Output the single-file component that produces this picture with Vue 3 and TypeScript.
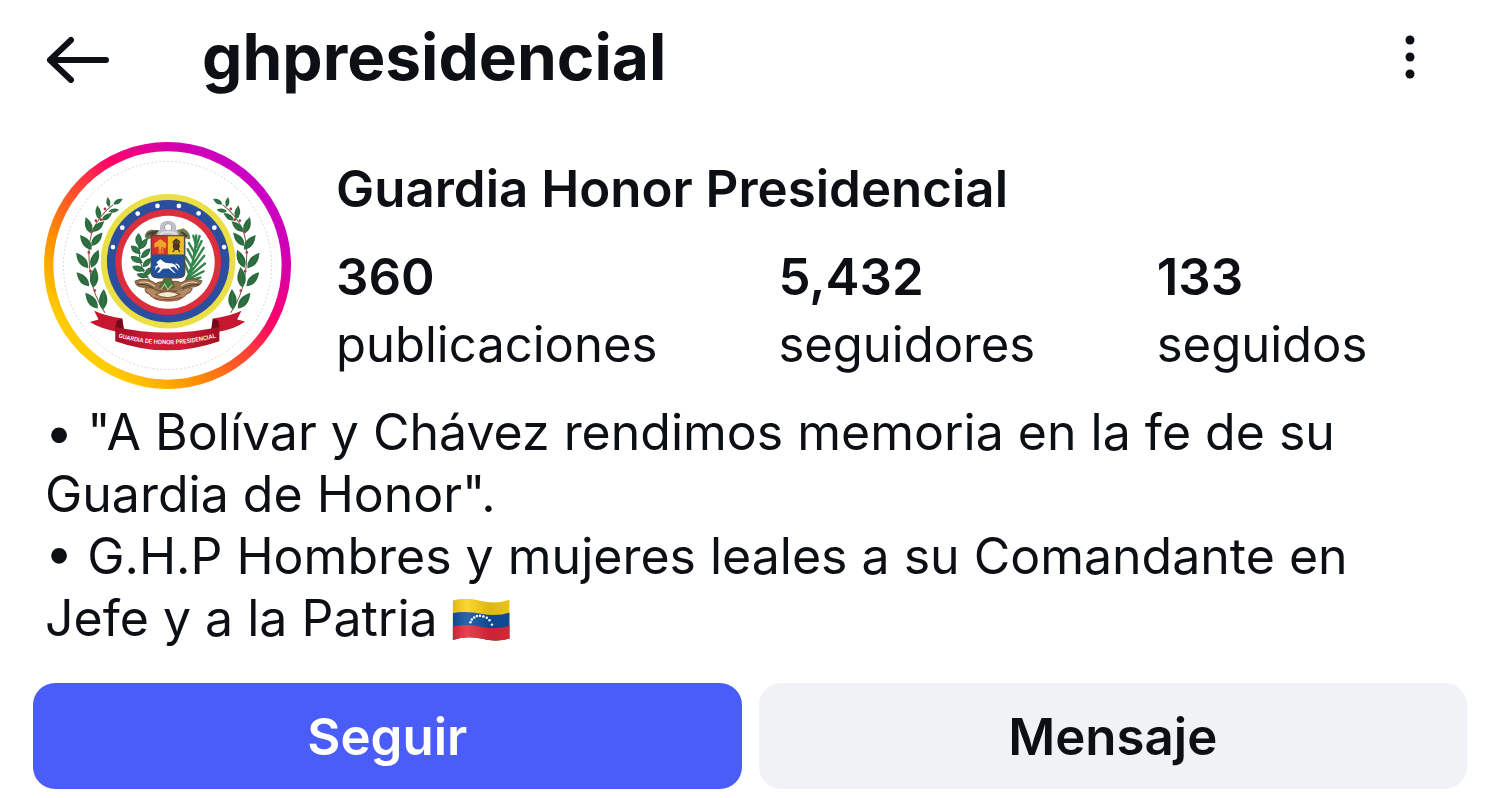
<script setup lang="ts">
interface Leaf {
  x: number
  y: number
  angle: number
  size: number
}

interface Stat {
  value: string
  label: string
}

const stats: Stat[] = [
  { value: '360', label: 'publicaciones' },
  { value: '5,432', label: 'seguidores' },
  { value: '133', label: 'seguidos' },
]

const leaves: Leaf[] = [
  { x: 236, y: 217, angle: -98, size: 30 },
  { x: 265, y: 216, angle: -30, size: 32 },
  { x: 253, y: 243, angle: -8, size: 32 },
  { x: 206, y: 248, angle: -98, size: 42 },
  { x: 232, y: 261, angle: -35, size: 38 },
  { x: 177, y: 287, angle: -108, size: 52 },
  { x: 206, y: 291, angle: -42, size: 48 },
  { x: 169, y: 338, angle: -128, size: 56 },
  { x: 202, y: 328, angle: -50, size: 52 },
  { x: 158, y: 392, angle: -128, size: 58 },
  { x: 196, y: 387, angle: -68, size: 58 },
  { x: 160, y: 448, angle: -132, size: 56 },
  { x: 194, y: 442, angle: -85, size: 62 },
  { x: 186, y: 512, angle: -128, size: 60 },
  { x: 221, y: 508, angle: -87, size: 62 },
]

const berries = [
  [226, 238], [199, 273], [186, 306], [178, 368], [183, 424], [196, 482], [214, 270],
]

const ringStars = [
  [250, 352], [278, 294], [324, 252], [383, 229],
  [447, 229], [506, 251], [553, 294], [582, 352],
]

const flagStars = [
  [106, 121], [110, 113], [117, 107], [125, 103],
  [134, 102], [144, 104], [154, 108], [162, 115], [169, 128],
]

function leafPath(size: number): string {
  const h = size / 2
  const w = size * 0.4
  return `M${-h} 0 Q${-h * 0.2} ${-w} ${h} 0 Q${-h * 0.2} ${w} ${-h} 0Z`
}
</script>

<template>
  <main class="profile">
    <header class="topbar">
      <button class="icon-button" type="button" aria-label="Volver">
        <svg class="back" viewBox="0 0 64 48" aria-hidden="true">
          <path d="M26 5 5 25 26 45M5 25H61" />
        </svg>
      </button>
      <h1 class="username">ghpresidencial</h1>
      <button class="icon-button" type="button" aria-label="Más opciones">
        <svg class="more" viewBox="0 0 12 44" aria-hidden="true">
          <circle cx="5" cy="3" r="4.5" />
          <circle cx="5" cy="20" r="4.5" />
          <circle cx="5" cy="37" r="4.5" />
        </svg>
      </button>
    </header>

    <section class="summary">
      <svg class="avatar" viewBox="44 38 738 738" role="img" aria-label="Guardia de Honor Presidencial">
        <defs>
          <linearGradient id="story" gradientUnits="userSpaceOnUse" x1="152" y1="668" x2="674" y2="146">
            <stop offset="0.04" stop-color="#ffcc00" />
            <stop offset="0.24" stop-color="#ff9200" />
            <stop offset="0.47" stop-color="#ff4434" />
            <stop offset="0.64" stop-color="#ff0069" />
            <stop offset="0.85" stop-color="#d300ae" />
            <stop offset="1" stop-color="#ca00c6" />
          </linearGradient>
          <linearGradient id="ribbon" x1="0" x2="1" y1="0" y2="0">
            <stop offset="0" stop-color="#a30d22" />
            <stop offset="0.35" stop-color="#cf1b35" />
            <stop offset="0.65" stop-color="#cf1b35" />
            <stop offset="1" stop-color="#a30d22" />
          </linearGradient>
          <path id="motto" d="M262 621Q412 663 562 621" />
          <g id="branch">
            <path class="stem" d="M226 548Q191 495 184 440Q170 355 190 300Q212 254 250 226" />
            <g v-for="(leaf, i) in leaves" :key="i" :transform="`translate(${leaf.x} ${leaf.y}) rotate(${leaf.angle})`">
              <path :d="leafPath(leaf.size)" fill="#296b3c" />
              <path class="vein" :d="`M${-leaf.size / 2} 0H${leaf.size / 2.6}`" />
            </g>
            <circle v-for="(b, i) in berries" :key="`b${i}`" :cx="b[0]" :cy="b[1]" r="4" fill="#b5383f" />
          </g>
        </defs>

        <circle cx="413" cy="407" r="355" fill="#fff" stroke="url(#story)" stroke-width="28" />
        <circle class="edge" cx="413" cy="407" r="311" />

        <use href="#branch" />
        <use href="#branch" transform="translate(828 0) scale(-1 1)" />

        <circle cx="415" cy="394" r="201" fill="#eadf45" />
        <circle cx="415" cy="394" r="183" fill="#2b4f9e" />
        <circle cx="415" cy="397" r="158" fill="#dc2f3d" />
        <circle cx="415" cy="397" r="139" fill="#fff" />
        <circle v-for="(s, i) in ringStars" :key="`s${i}`" :cx="s[0]" :cy="s[1]" r="7" fill="#fff" />

        <!-- laurel and palm beside the shield -->
        <g class="laurel">
          <path d="M361 452Q323 420 328 320" />
          <path d="M327 312Q309 332 328 350Q343 331 327 312M352 327Q327 338 330 357Q353 352 352 327M305 349Q307 371 331 371Q328 349 305 349M360 357Q337 363 335 383Q358 382 360 357M304 381Q311 402 337 398Q329 377 304 381M363 386Q341 390 340 410Q361 410 363 386M309 410Q317 429 344 422Q333 404 309 410M364 414Q345 417 347 436Q366 435 364 414M322 433Q332 448 355 441Q342 426 322 433" />
        </g>
        <g class="palm">
          <path d="M468 451Q494 405 499 317" />
          <path d="M494 370 477 340M493 380 515 334M491 392 473 358M489 405 521 354M486 415 467 382M482 427 523 378M479 436 465 402M475 442 525 401M472 450 521 424M469 454 511 443M498 345 490 318M498 352 509 319" />
        </g>

        <!-- cornucopias -->
        <path d="M345 319Q348 303 365 300L389 302Q394 313 381 319L364 323Q351 337 345 319Z" fill="#687549" />
        <path d="M440 302 461 296Q482 309 481 327Q474 333 461 319L440 319Z" fill="#758052" />
        <path d="M352 314 374 306M454 306 472 320M365 318 383 303" stroke="#4b3e31" stroke-width="6" />
        <path d="M382 317Q381 305 393 301Q387 276 414 275Q441 276 437 300Q447 304 447 318Z" fill="#c3c3cb" stroke="#a3a1aa" stroke-width="2" />
        <circle cx="415" cy="293" r="11" fill="#fff" stroke="#9c9aa4" stroke-width="3" />
        <path d="M391 313Q414 300 440 313" fill="none" stroke="#e2e1e7" stroke-width="5" />

        <!-- shield -->
        <path d="M364 318H465V427Q465 444 444 444H385Q364 444 364 427Z" fill="#23509b" />
        <path d="M367 318H414V374H367Z" fill="#d72f2b" />
        <path d="M414 318H462V374H414Z" fill="#efbe20" />
        <path d="M364 318H465V427Q465 444 444 444H385Q364 444 364 427Z" fill="none" stroke="#58402c" stroke-width="3" />
        <path d="M388 372V349M393 372V349M399 372V349M376 352Q372 339 383 337Q391 323 401 337Q412 340 406 354Q394 343 391 357Q387 343 376 352Z" fill="#f0a42d" stroke="#f0a42d" stroke-width="3" />
        <path d="M429 366 450 336M429 336 450 366M439 326V361M430 350H450M432 334Q439 325 447 334V354Q439 363 431 354Z" fill="#885d1c" stroke="#46351e" stroke-width="4" />
        <path d="M370 411Q378 413 385 405L380 397 392 388 399 394Q406 401 421 400Q435 400 440 411L446 424 439 417 432 411 421 413 438 430 431 428 417 416 399 417 388 429 382 428 392 415 385 411 375 422 378 412Z" fill="#fff" />
        <path d="M437 402Q448 405 448 414" fill="none" stroke="#fff" stroke-width="4" />

        <!-- ribbons under the shield -->
        <g class="scroll">
          <path d="M316 454Q345 440 378 461Q401 448 414 468Q430 446 454 459Q483 439 516 453Q510 473 477 472L453 477Q435 488 414 481Q393 489 374 477L346 472Q319 474 316 454Z" fill="#987451" />
          <path d="M346 477Q362 469 378 481Q397 489 414 482Q440 489 458 479Q472 469 487 477Q482 488 470 492Q451 516 414 513Q374 514 358 492Q346 488 346 477Z" fill="#b68b62" />
          <path d="M378 493Q414 476 450 493Q432 503 414 503Q393 503 378 493Z" fill="#f3ead2" />
          <path d="M329 458Q354 452 375 469M453 468Q479 450 502 459" stroke="#f2d8b1" />
          <path d="M323 463Q350 461 370 475M458 474Q480 464 507 464" stroke="#463b34" />
          <path d="M372 503Q414 516 456 502" stroke="#a93133" />
          <path d="M404 444 389 472 412 480 434 472 424 446Z" fill="#457b39" />
          <path d="M393 478 405 462 414 480 427 464" stroke="#d0c9a0" />
        </g>

        <!-- motto ribbon -->
        <path d="M194 542Q225 557 278 565L283 599 259 604Q211 595 181 576L207 568Z" fill="#c5172f" />
        <path d="M634 542Q603 557 550 565L545 599 569 604Q617 595 645 574L621 568Z" fill="#c5172f" />
        <path d="M257 594 283 602 277 565 261 572ZM568 594 543 602 548 565 565 572Z" fill="#73091a" />
        <path d="M257 591Q412 624 568 591V633Q412 688 257 633Z" fill="url(#ribbon)" />
        <text class="motto"><textPath href="#motto" startOffset="50%">GUARDIA DE HONOR PRESIDENCIAL</textPath></text>
      </svg>

      <div class="info">
        <h2 class="name">Guardia Honor Presidencial</h2>
        <ul class="stats">
          <li v-for="stat in stats" :key="stat.label">
            <a class="stat" href="#">
              <strong>{{ stat.value }}</strong>
              <span>{{ stat.label }}</span>
            </a>
          </li>
        </ul>
      </div>
    </section>

    <p class="bio">
      • "A Bolívar y Chávez rendimos memoria en la fe de su<br />
      Guardia de Honor".<br />
      • G.H.P Hombres y mujeres leales a su Comandante en<br />
      Jefe y a la Patria
      <svg class="flag" viewBox="52 50 170 126" role="img" aria-label="Bandera de Venezuela">
        <defs>
          <clipPath id="flag-shape">
            <path d="M54 57Q91 47 135 58Q180 69 221 55V169Q181 181 137 169Q92 159 54 173Z" />
          </clipPath>
          <linearGradient id="flag-shade" x1="0" x2="1" y1="0" y2="0">
            <stop offset="0" stop-color="#000" stop-opacity="0.12" />
            <stop offset="0.25" stop-color="#fff" stop-opacity="0.12" />
            <stop offset="0.65" stop-color="#000" stop-opacity="0.12" />
            <stop offset="1" stop-color="#000" stop-opacity="0.06" />
          </linearGradient>
        </defs>
        <g clip-path="url(#flag-shape)">
          <path d="M52 45H224V180H52Z" fill="#fbd116" />
          <path d="M52 95Q91 86 137 96Q182 106 224 92V180H52Z" fill="#0e50a0" />
          <path d="M52 134Q91 124 137 134Q182 144 224 131V180H52Z" fill="#e5283a" />
          <path d="M52 45H224V180H52Z" fill="url(#flag-shade)" />
        </g>
        <circle v-for="(s, i) in flagStars" :key="i" :cx="s[0]" :cy="s[1]" r="3.6" fill="#fff" />
      </svg>
    </p>

    <div class="actions">
      <button class="action primary" type="button">Seguir</button>
      <button class="action" type="button">Mensaje</button>
    </div>
  </main>
</template>

<style>
body {
  margin: 0;
  background: #fff;
}
</style>

<style scoped>
.profile {
  box-sizing: border-box;
  padding: 16px 33px 9px;
  color: #0c1014;
  font-family: Inter, "Noto Sans", sans-serif;
}

.topbar {
  display: flex;
  align-items: center;
  height: 86px;
  padding: 0 50px 0 12px;
}

.icon-button {
  display: flex;
  padding: 0;
  border: 0;
  background: none;
  color: inherit;
}

.back {
  width: 64px;
  height: 48px;
  fill: none;
  stroke: currentColor;
  stroke-width: 6;
  stroke-linecap: round;
  stroke-linejoin: round;
}

.more {
  width: 12px;
  height: 44px;
  overflow: visible;
  fill: currentColor;
}

.username {
  flex: 1;
  margin: 0 0 4px 93px;
  font-size: 64px;
  font-weight: 700;
  line-height: 80px;
}

.summary {
  display: flex;
  gap: 45px;
  margin-top: 40px;
  padding-left: 11px;
}

.avatar {
  flex: none;
  width: 247px;
  height: 247px;
}

.edge {
  fill: none;
  stroke: #bbb;
  stroke-width: 2;
  stroke-dasharray: 5 7;
}

.stem {
  fill: none;
  stroke: #7c5b48;
  stroke-width: 3;
}

.vein {
  fill: none;
  stroke: #5c9166;
  stroke-width: 1;
}

.laurel {
  fill: #347849;
  stroke: #25683c;
  stroke-width: 3;
}

.laurel path:first-child,
.palm {
  fill: none;
}

.palm {
  stroke: #34864d;
  stroke-width: 7;
  stroke-linecap: round;
}

.scroll {
  fill: none;
  stroke: #795537;
  stroke-width: 3;
}

.motto {
  fill: #fff;
  font-family: Roboto, sans-serif;
  font-size: 18px;
  font-weight: 500;
  text-anchor: middle;
}

.info {
  flex: 1;
  padding-top: 18px;
}

.name {
  margin: 0;
  font-size: 51px;
  font-weight: 600;
  line-height: 58px;
}

.stats {
  display: grid;
  grid-template-columns: 442fr 378fr 310fr;
  margin: 25px 0 0;
  padding: 0;
  list-style: none;
}

.stat {
  display: flex;
  flex-direction: column;
  color: inherit;
  font-size: 49px;
  line-height: 68px;
  text-decoration: none;
}

.stat strong {
  font-size: 51px;
  font-weight: 600;
}

.bio {
  margin: 12px 0 0;
  padding-left: 12px;
  font-size: 50px;
  line-height: 62px;
}

.flag {
  width: 58px;
  height: 43px;
  vertical-align: -5px;
}

.actions {
  display: grid;
  grid-template-columns: 1fr 1fr;
  gap: 17px;
  margin-top: 34px;
}

.action {
  height: 106px;
  padding: 0;
  border: 0;
  border-radius: 22px;
  background: #f0f2f6;
  color: #0c1014;
  font-family: inherit;
  font-size: 51px;
  font-weight: 600;
}

.primary {
  background: #4a5df9;
  color: #fff;
}
</style>
